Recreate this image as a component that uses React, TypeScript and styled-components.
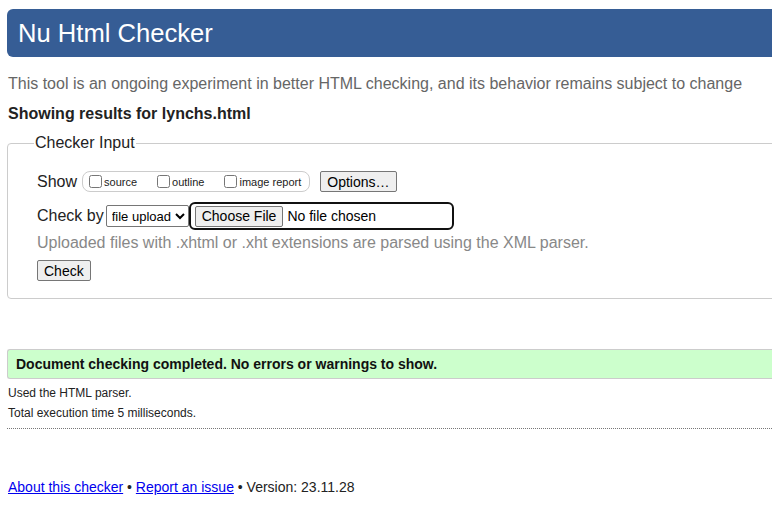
import styled, { createGlobalStyle } from "styled-components";

const GlobalStyle = createGlobalStyle`
  html, body {
    margin: 0;
    padding: 0;
    background: #fff;
    overflow: hidden;
  }
  body {
    font-family: "Liberation Sans", Arial, sans-serif;
    color: #222;
  }
`;

const Page = styled.div`
  width: 830px;
  padding: 9px 0 0 7px;
  box-sizing: border-box;
`;

const Header = styled.h1`
  margin: 0;
  height: 48px;
  line-height: 48px;
  padding-left: 11px;
  background: #365d95;
  color: #fff;
  font-size: 25.6px;
  font-weight: normal;
  border-radius: 6px 0 0 6px;
`;

const Intro = styled.p`
  margin: 17px 0 0 1px;
  font-size: 16px;
  line-height: 20px;
  color: #666;
`;

const ResultsFor = styled.p`
  margin: 10px 0 0 1px;
  font-size: 16px;
  line-height: 20px;
  font-weight: bold;
  color: #222;
`;

const Fieldset = styled.fieldset`
  margin: 10px 0 0 0;
  padding: 19px 0 17px 29px;
  border: 1px solid #ccc;
  border-radius: 4px;
`;

const Legend = styled.legend`
  margin-left: -3px;
  padding: 0 1px;
  font-size: 16px;
  color: #222;
`;

const Row = styled.div<{ $gap?: number }>`
  display: flex;
  align-items: center;
  margin-top: ${({ $gap }) => $gap ?? 0}px;
`;

const Label = styled.span<{ $muted?: boolean }>`
  font-size: 16px;
  line-height: 20px;
  color: ${({ $muted }) => ($muted ? "#888" : "#222")};
`;

const ShowBox = styled.div`
  display: flex;
  align-items: center;
  height: 19px;
  margin-left: 5px;
  padding: 0 8px 0 6px;
  border: 1px solid #ccc;
  border-radius: 8px;
`;

const CheckItem = styled.label<{ $spacing: number }>`
  display: flex;
  align-items: center;
  font-size: 11px;
  color: #222;
  margin-left: ${({ $spacing }) => $spacing}px;
`;

const Box = styled.input`
  width: 13px;
  height: 13px;
  margin: 0 2px 0 0;
`;

const Button = styled.button<{ $ml?: number }>`
  margin-left: ${({ $ml }) => $ml ?? 0}px;
  height: 21px;
  padding: 0 6px;
  font-family: "Liberation Sans", Arial, sans-serif;
  font-size: 14px;
  color: #000;
  background: #efefef;
  border: 1px solid #767676;
  border-radius: 2px;
`;

const Select = styled.select`
  margin-left: 2px;
  height: 22px;
  font-family: "Liberation Sans", Arial, sans-serif;
  font-size: 13px;
  color: #000;
  border: 1px solid #767676;
  border-radius: 2px;
  background: #fff;
  padding: 0 0 0 1px;
`;

const FileWrap = styled.div`
  display: flex;
  align-items: center;
  width: 257px;
  height: 24px;
  padding: 0 0 0 4px;
  border: 2px solid #111;
  border-radius: 6px;
`;

const FileName = styled.span`
  margin-left: 4px;
  font-size: 14px;
  color: #000;
`;

const Success = styled.div`
  margin-top: 50px;
  height: 28px;
  line-height: 28px;
  padding-left: 8px;
  background: #ccffcc;
  border: 1px solid #ccc;
  border-right: none;
  border-radius: 3px 0 0 3px;
  font-size: 14px;
  font-weight: bold;
  color: #111;
`;

const Details = styled.div`
  margin-top: 4px;
  padding-left: 1px;
  font-size: 12px;
  line-height: 20px;
  color: #222;
`;

const Divider = styled.hr`
  margin: 5px 0 0 0;
  border: none;
  border-top: 1px dotted #777;
`;

const Footer = styled.p`
  margin: 49px 0 0 1px;
  font-size: 14px;
  line-height: 18px;
  color: #222;
`;

const Link = styled.a`
  color: #0000ee;
  text-decoration: underline;
`;

export default function App() {
  return (
    <Page>
      <GlobalStyle />
      <Header>Nu Html Checker</Header>
      <Intro>
        This tool is an ongoing experiment in better HTML checking, and its
        behavior remains subject to change
      </Intro>
      <ResultsFor>Showing results for lynchs.html</ResultsFor>
      <Fieldset>
        <Legend>Checker Input</Legend>
        <Row>
          <Label>Show</Label>
          <ShowBox>
            <CheckItem $spacing={0}>
              <Box type="checkbox" />
              source
            </CheckItem>
            <CheckItem $spacing={20}>
              <Box type="checkbox" />
              outline
            </CheckItem>
            <CheckItem $spacing={20}>
              <Box type="checkbox" />
              image report
            </CheckItem>
          </ShowBox>
          <Button $ml={10}>Options…</Button>
        </Row>
        <Row $gap={10}>
          <Label>Check by</Label>
          <Select defaultValue="file">
            <option value="file">file upload</option>
          </Select>
          <FileWrap>
            <Button>Choose File</Button>
            <FileName>No file chosen</FileName>
          </FileWrap>
        </Row>
        <Row $gap={3}>
          <Label $muted>
            Uploaded files with .xhtml or .xht extensions are parsed using the
            XML parser.
          </Label>
        </Row>
        <Row $gap={7}>
          <Button>Check</Button>
        </Row>
      </Fieldset>
      <Success>Document checking completed. No errors or warnings to show.</Success>
      <Details>
        <div>Used the HTML parser.</div>
        <div>Total execution time 5 milliseconds.</div>
      </Details>
      <Divider />
      <Footer>
        <Link href="#">About this checker</Link> •{" "}
        <Link href="#">Report an issue</Link> • Version: 23.11.28
      </Footer>
    </Page>
  );
}
